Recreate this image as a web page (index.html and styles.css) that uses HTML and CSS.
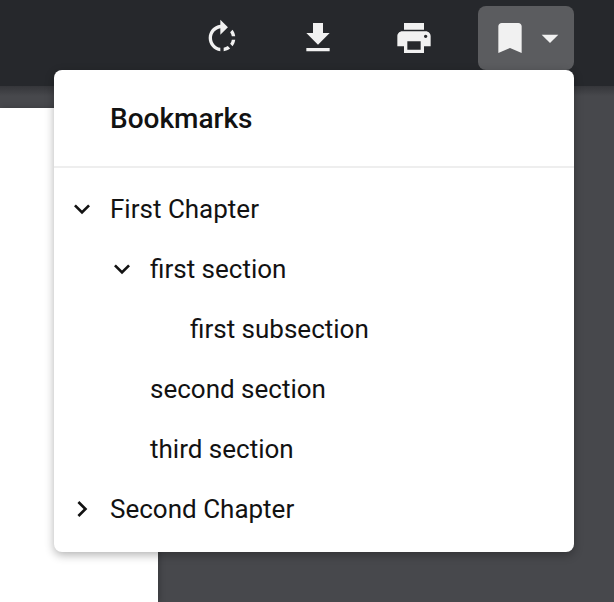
FILE: index.html
```html
<!DOCTYPE html>
<html lang="en">
<head>
    <meta charset="UTF-8">
    <meta name="viewport" content="width=device-width, initial-scale=1.0">
    <title>Bookmarks</title>
    <link rel="stylesheet" href="styles.css">
</head>
<body>
    <div class="toolbar">
        <button class="tool-btn" type="button">
            <svg class="icon" viewBox="0 0 24 24"><path d="M15.55 5.55L11 1v3.07C7.06 4.56 4 7.92 4 12s3.05 7.44 7 7.93v-2.02c-2.84-.48-5-2.94-5-5.91s2.16-5.43 5-5.91V10l4.55-4.45zM19.93 11c-.17-1.39-.72-2.73-1.62-3.89l-1.42 1.42c.54.75.88 1.6 1.02 2.47h2.02zM13 17.9v2.02c1.39-.17 2.74-.71 3.9-1.61l-1.44-1.44c-.75.54-1.59.89-2.46 1.03zm3.89-2.42l1.42 1.41c.9-1.16 1.45-2.5 1.62-3.89h-2.02c-.14.87-.48 1.72-1.02 2.48z"/></svg>
        </button>
        <button class="tool-btn" type="button">
            <svg class="icon" viewBox="0 0 24 24"><path d="M19 9h-4V3H9v6H5l7 7 7-7zM5 18v2h14v-2H5z"/></svg>
        </button>
        <button class="tool-btn" type="button">
            <svg class="icon" viewBox="0 0 24 24"><path d="M19 8H5c-1.66 0-3 1.34-3 3v6h4v4h12v-4h4v-6c0-1.66-1.34-3-3-3zm-3 11H8v-5h8v5zm3-7c-.55 0-1-.45-1-1s.45-1 1-1 1 .45 1 1-.45 1-1 1zm-1-9H6v4h12V3z"/></svg>
        </button>
        <button class="tool-btn bookmark-btn" type="button">
            <svg class="icon" viewBox="0 0 24 24"><path d="M17 3H7c-1.1 0-2 .9-2 2v16l7-3 7 3V5c0-1.1-.9-2-2-2z"/></svg>
            <svg class="icon" viewBox="0 0 24 24"><path d="M7 10l5 5 5-5z"/></svg>
        </button>
    </div>

    <div class="viewer">
        <div class="pdf-page"></div>
    </div>

    <div class="bookmarks-menu">
        <h3 class="menu-title">Bookmarks</h3>
        <ul class="tree">
            <li class="tree-row">
                <svg class="chevron" viewBox="0 0 24 24"><path d="M7.41 8.59L12 13.17l4.59-4.58L18 10l-6 6-6-6z"/></svg>
                First Chapter
            </li>
            <li class="tree-row level-2">
                <svg class="chevron" viewBox="0 0 24 24"><path d="M7.41 8.59L12 13.17l4.59-4.58L18 10l-6 6-6-6z"/></svg>
                first section
            </li>
            <li class="tree-row level-3">first subsection</li>
            <li class="tree-row level-2">second section</li>
            <li class="tree-row level-2">third section</li>
            <li class="tree-row">
                <svg class="chevron" viewBox="0 0 24 24"><path d="M8.59 16.59L13.17 12 8.59 7.41 10 6l6 6-6 6z"/></svg>
                Second Chapter
            </li>
        </ul>
    </div>
</body>
</html>
```

FILE: styles.css
```css
html, body {
    height: 100%;
}
body {
    font-family: Roboto, "Liberation Sans", sans-serif;
    background-color: #47484c;
    display: flex;
    flex-direction: column;
    margin: 0;
    overflow: hidden;
}
.toolbar {
    background-color: #26282c;
    height: 86px;
    padding: 6px 40px 0 0;
    box-sizing: border-box;
    display: flex;
    justify-content: flex-end;
    align-items: flex-start;
    flex-shrink: 0;
}
.tool-btn {
    width: 96px;
    height: 64px;
    padding: 0;
    border: none;
    border-radius: 8px;
    background: none;
    display: flex;
    align-items: center;
    justify-content: center;
}
.icon {
    width: 40px;
    height: 40px;
    fill: #f1f1f1;
    flex-shrink: 0;
}
.bookmark-btn {
    background-color: #5b5c5f;
    margin-left: 16px;
    justify-content: flex-start;
    padding-left: 12px;
    box-sizing: border-box;
}
.viewer {
    flex: 1;
    padding-top: 22px;
    background: linear-gradient(#35363a, #47484c 10px);
}
.pdf-page {
    width: 158px;
    height: 100%;
    background-color: white;
    box-shadow: 2px 0 6px rgba(0, 0, 0, 0.2);
}
.bookmarks-menu {
    position: absolute;
    left: 54px;
    top: 70px;
    width: 520px;
    background-color: white;
    border-radius: 8px;
    box-shadow: 0 3px 10px rgba(0, 0, 0, 0.3);
    color: #121212;
}
.menu-title {
    margin: 0;
    height: 98px;
    box-sizing: border-box;
    padding: 33px 0 0 56px;
    font-size: 28px;
    line-height: 32px;
    font-weight: 500;
    border-bottom: 2px solid #eeeeee;
}
.tree {
    list-style: none;
    margin: 0;
    padding: 11px 0 13px;
}
.tree-row {
    position: relative;
    height: 60px;
    line-height: 60px;
    padding-left: 56px;
    font-size: 26px;
}
.level-2 {
    padding-left: 96px;
}
.level-3 {
    padding-left: 136px;
}
.chevron {
    position: absolute;
    width: 32px;
    height: 32px;
    top: 14px;
    margin-left: -44px;
    fill: #121212;
}
```
